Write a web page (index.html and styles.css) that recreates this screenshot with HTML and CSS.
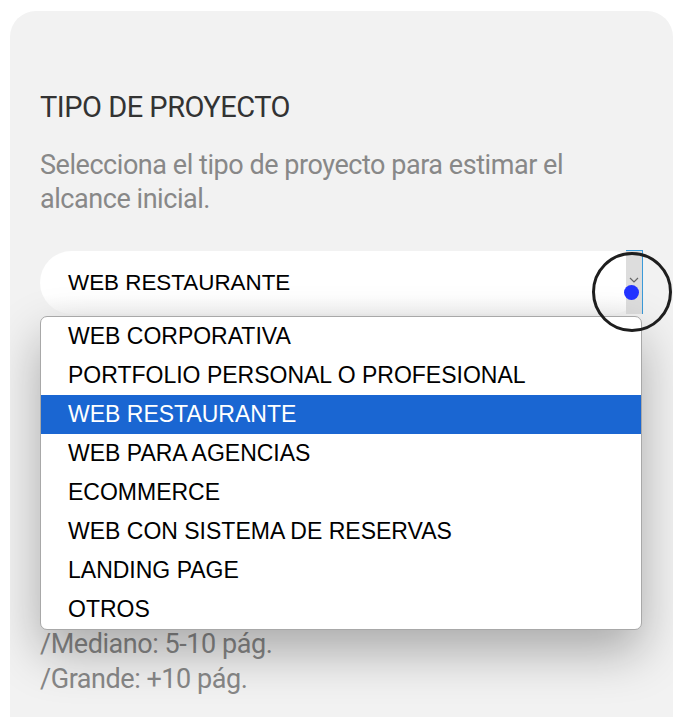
FILE: index.html
```html
<!DOCTYPE html>
<html lang="es">
<head>
<meta charset="utf-8">
<title>Tipo de proyecto</title>
<link rel="stylesheet" href="styles.css">
</head>
<body>
<div class="card">
  <h2 class="title">TIPO DE PROYECTO</h2>
  <p class="desc">Selecciona el tipo de proyecto para estimar el alcance inicial.</p>
  <div class="field">
    <div class="select">
      <span class="select-value">WEB RESTAURANTE</span>
      <div class="select-arrow"><svg width="10" height="6" viewBox="0 0 10 6"><path d="M1 1l4 4 4-4" fill="none" stroke="#666" stroke-width="1.2"/></svg></div>
    </div>
    <ul class="options">
      <li>WEB CORPORATIVA</li>
      <li>PORTFOLIO PERSONAL O PROFESIONAL</li>
      <li class="active">WEB RESTAURANTE</li>
      <li>WEB PARA AGENCIAS</li>
      <li>ECOMMERCE</li>
      <li>WEB CON SISTEMA DE RESERVAS</li>
      <li>LANDING PAGE</li>
      <li>OTROS</li>
    </ul>
    <div class="cursor"><span class="cursor-dot"></span></div>
  </div>
  <div class="below">
    <h3 class="sub">TAMAÑO DEL PROYECTO</h3>
    <p class="note">Indica el número aproximado de páginas.</p>
    <p class="sizes">/Pequeño: 1-5 pág.<br>/Mediano: 5-10 pág.<br>/Grande: +10 pág.</p>
  </div>
</div>
</body>
</html>
```
FILE: styles.css
```css
html, body {
  margin: 0;
  padding: 0;
  background: #ffffff;
}
body {
  padding: 11px 14px 0 10px;
  height: 717px;
  overflow: hidden;
  box-sizing: border-box;
}
.card {
  background: #f2f2f2;
  border-radius: 26px 26px 0 0;
  padding: 80px 30px 0 30px;
  height: 706px;
  box-sizing: border-box;
  overflow: hidden;
  position: relative;
  font-family: Roboto, "Liberation Sans", sans-serif;
}
.title {
  margin: 0;
  font-size: 29px;
  font-weight: 400;
  line-height: 32px;
  color: #333333;
  letter-spacing: -0.5px;
}
.desc {
  margin: 25px 0 0 0;
  font-size: 27px;
  line-height: 34px;
  color: #888888;
  letter-spacing: -0.45px;
  max-width: 560px;
}
.field {
  position: relative;
  margin-top: 35px;
}
.select {
  height: 63px;
  background: linear-gradient(#ffffff 70%, #f6f6f6);
  border-radius: 32px;
  display: flex;
  align-items: center;
  padding-left: 28px;
  font-family: "Liberation Sans", Arial, sans-serif;
  font-size: 22.4px;
  color: #000;
}
.select-arrow {
  position: absolute;
  right: 0;
  top: -1px;
  width: 17px;
  height: 64px;
  background: #dddddd;
  border-top: 1px solid #3a9ad9;
  border-right: 1px solid #3a9ad9;
  display: flex;
  justify-content: center;
  padding-top: 26px;
  box-sizing: border-box;
}
.options {
  position: absolute;
  left: 0;
  right: 1px;
  top: 65px;
  margin: 0;
  padding: 0;
  list-style: none;
  background: #ffffff;
  border: 1px solid #a8a8a8;
  border-radius: 7px;
  box-shadow: 0 22px 50px rgba(0, 0, 0, 0.3);
  font-family: "Liberation Sans", Arial, sans-serif;
  font-size: 23px;
  color: #000;
  z-index: 2;
  overflow: hidden;
}
.options li {
  height: 39px;
  line-height: 39px;
  padding-left: 27px;
}
.options li.active {
  background: #1a66d2;
  color: #ffffff;
}
.cursor {
  position: absolute;
  left: 552px;
  top: 1px;
  width: 74px;
  height: 74px;
  border: 3px solid #1e1e1e;
  border-radius: 50%;
  z-index: 3;
  display: flex;
  align-items: center;
  justify-content: center;
}
.cursor-dot {
  width: 15px;
  height: 15px;
  border-radius: 50%;
  background: #2233ff;
  margin-left: -2px;
}
.below {
  padding-top: 171px;
}
.sub {
  margin: 0;
  font-size: 29px;
  font-weight: 400;
  line-height: 32px;
  color: #333;
}
.note, .sizes {
  margin: 20px 0 0 0;
  font-size: 27px;
  line-height: 35px;
  color: #888888;
  letter-spacing: -0.45px;
}
```
